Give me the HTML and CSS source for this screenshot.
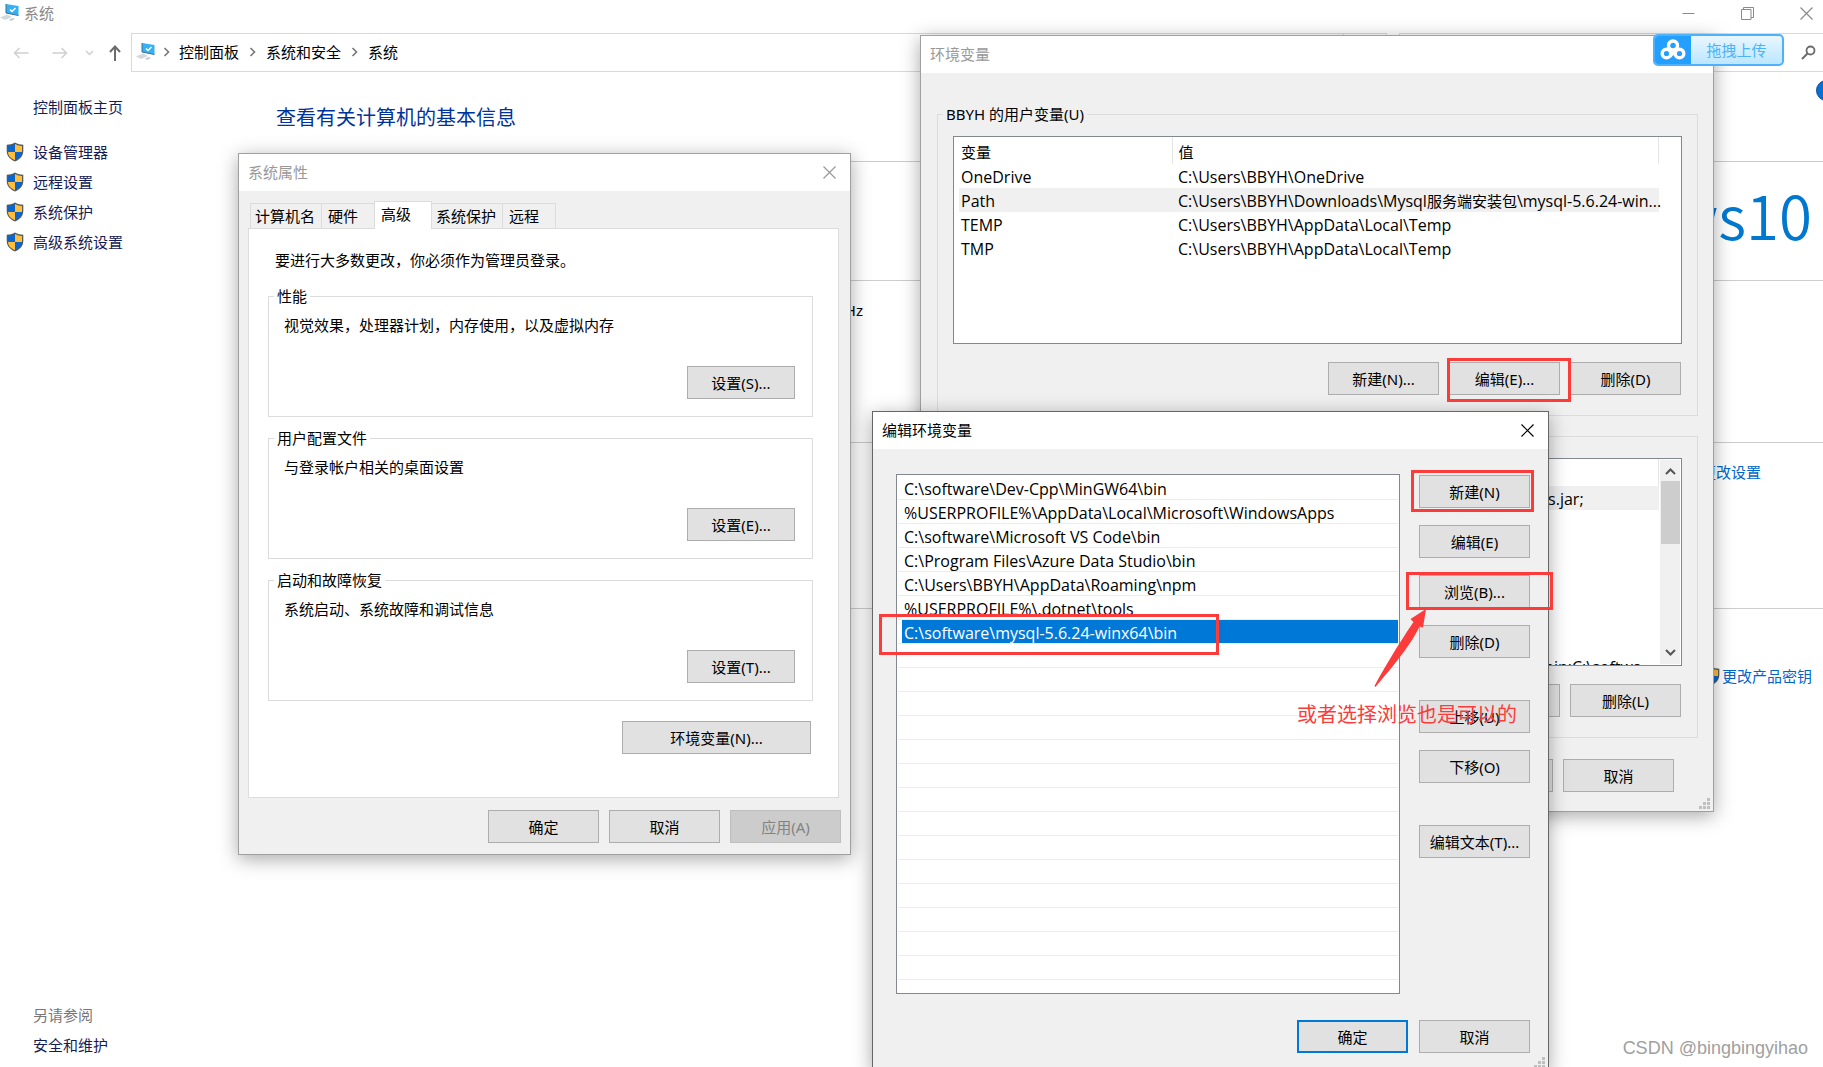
FILE: index.html
```html
<!DOCTYPE html>
<html lang="zh-CN">
<head>
<meta charset="utf-8">
<title>系统</title>
<link rel="stylesheet" href="styles.css">
</head>
<body>
<svg class="defs" aria-hidden="true">
  <symbol id="shield" viewBox="0 0 18 20">
    <path d="M9 0.5C6.500 2 3.500 2.700 0.700 2.700V9c0 5 3.500 8.500 8.300 10.500C13.800 17.500 17.300 14 17.300 9V2.700C14.500 2.700 11.500 2 9 .5z" fill="#555a5e"/>
    <path d="M9 2C7 3.200 4.500 3.900 2 4v6h7z" fill="#0a66cc"/>
    <path d="M9 2c2 1.200 4.500 1.900 7 2v6H9z" fill="#ffbf3c"/>
    <path d="M2 10h7v8.200C5 16.500 2.200 14 2 10z" fill="#ffbf3c"/>
    <path d="M16 10H9v8.200c4-1.700 6.800-4.200 7-8.200z" fill="#0a66cc"/>
  </symbol>
  <symbol id="computer" viewBox="0 0 20 18">
    <path d="M0 13.500l7-3 5 2.500-7 3z" fill="#d3d8dc"/>
    <path d="M9 15.500l4-1.500 2 1-4 2z" fill="#c3c9ce"/>
    <path d="M6 0l12.500 2v9.500L6 9z" fill="#35b0f5"/>
    <path d="M6 0v9l12.500 2.500" fill="none" stroke="#3c6e92"/>
    <path d="M10 5.500l2 2 3.500-3.500" fill="none" stroke="#fff" stroke-width="1.500"/>
  </symbol>
  <symbol id="cross" viewBox="0 0 13 13">
    <path d="M.5.5l12 12M12.500.5l-12 12" fill="none" stroke="currentColor" stroke-width="1.200"/>
  </symbol>
  <symbol id="chevron" viewBox="0 0 7 10">
    <path d="M1.500 1l4 4-4 4" fill="none" stroke="currentColor" stroke-width="1.600"/>
  </symbol>
  <symbol id="grip" viewBox="0 0 11 11">
    <path d="M8 0h3v3H8zM4 4h3v3H4zM8 4h3v3H8zM0 8h3v3H0zM4 8h3v3H4zM8 8h3v3H8z" fill="#bfbfbf"/>
  </symbol>
</svg>

<div class="desktop">
  <div class="explorer">
    <header class="titlebar">
      <svg class="ico-computer"><use href="#computer"/></svg>
      <span class="titlebar-text">系统</span>
      <div class="caption">
        <button class="caption-btn" aria-label="最小化"><svg width="13" height="13" viewBox="0 0 13 13"><path d="M.5 6.500h12" stroke="currentColor"/></svg></button>
        <button class="caption-btn" aria-label="还原"><svg width="13" height="13" viewBox="0 0 13 13"><path d="M.5 2.500h9.500v10H.5zM2.500 2.500v-2h10v10H10" fill="none" stroke="currentColor"/></svg></button>
        <button class="caption-btn" aria-label="关闭"><svg width="13" height="13"><use href="#cross"/></svg></button>
      </div>
    </header>

    <nav class="navbar">
      <div class="nav-buttons">
        <svg class="nav-off" width="16" height="12" viewBox="0 0 16 12"><path d="M15.500 6H1.500M6.500 1l-5 5 5 5" fill="none" stroke="currentColor" stroke-width="1.500"/></svg>
        <svg class="nav-off nav-forward" width="16" height="12" viewBox="0 0 16 12"><path d="M.5 6h14M9.500 1l5 5-5 5" fill="none" stroke="currentColor" stroke-width="1.500"/></svg>
        <svg class="nav-off nav-recent" width="9" height="6" viewBox="0 0 9 6"><path d="M1 1l3.500 3.500L8 1" fill="none" stroke="currentColor" stroke-width="1.500"/></svg>
        <svg class="nav-up" width="12" height="16" viewBox="0 0 12 16"><path d="M6 16V2M1 7l5-5.500L11 7" fill="none" stroke="currentColor" stroke-width="2"/></svg>
      </div>
      <div class="address">
        <svg class="ico-computer"><use href="#computer"/></svg>
        <svg class="crumb-sep"><use href="#chevron"/></svg>
        <a href="#panel">控制面板</a>
        <svg class="crumb-sep"><use href="#chevron"/></svg>
        <a href="#security">系统和安全</a>
        <svg class="crumb-sep"><use href="#chevron"/></svg>
        <a href="#system">系统</a>
        <span class="address-refresh"></span>
      </div>
      <div class="search">
        <svg width="15" height="15" viewBox="0 0 15 15"><circle cx="9.500" cy="5.500" r="4" fill="none" stroke="#6b6b6b" stroke-width="1.800"/><path d="M6.500 8.500L1 14" stroke="#6b6b6b" stroke-width="2"/></svg>
      </div>
    </nav>

    <div class="content">
      <aside class="sidebar">
        <a class="side-home" href="#home">控制面板主页</a>
        <ul class="side-list">
          <li><svg class="ico-shield"><use href="#shield"/></svg><a href="#devices">设备管理器</a></li>
          <li><svg class="ico-shield"><use href="#shield"/></svg><a href="#remote">远程设置</a></li>
          <li><svg class="ico-shield"><use href="#shield"/></svg><a href="#protect">系统保护</a></li>
          <li><svg class="ico-shield"><use href="#shield"/></svg><a href="#advanced">高级系统设置</a></li>
        </ul>
        <div class="see-also">
          <span>另请参阅</span>
          <a href="#maintenance">安全和维护</a>
        </div>
      </aside>
      <main class="main">
        <span class="help"></span>
        <h1>查看有关计算机的基本信息</h1>
        <section class="sec-edition">
          <h2>Windows 版本</h2>
          <div class="win10"><span>Windows</span><span>10</span></div>
        </section>
        <section class="sec-system">
          <h2>系统</h2>
          <div class="cpu">2.40GHz 2.42 GHz</div>
        </section>
        <section class="sec-name">
          <h2>计算机名</h2>
          <a class="link-change" href="#change">更改设置</a>
        </section>
        <section class="sec-activate">
          <h2>激活</h2>
          <div class="key"><svg class="ico-shield"><use href="#shield"/></svg><a href="#key">更改产品密钥</a></div>
        </section>
      </main>
    </div>
  </div>

  <div class="dialog dialog-props" role="dialog" aria-label="系统属性">
    <header class="dialog-title">
      <span>系统属性</span>
      <button class="close" aria-label="关闭"><svg width="13" height="13"><use href="#cross"/></svg></button>
    </header>
    <div class="props-body">
      <div class="tabs" role="tablist">
        <button class="tab tab-long" role="tab">计算机名</button>
        <button class="tab" role="tab">硬件</button>
        <button class="tab tab-active" role="tab" aria-selected="true">高级</button>
        <button class="tab tab-long" role="tab">系统保护</button>
        <button class="tab" role="tab">远程</button>
      </div>
      <div class="pane">
        <p class="pane-note">要进行大多数更改，你必须作为管理员登录。</p>
        <fieldset class="props-group">
          <legend>性能</legend>
          <p>视觉效果，处理器计划，内存使用，以及虚拟内存</p>
          <button class="btn">设置(S)...</button>
        </fieldset>
        <fieldset class="props-group">
          <legend>用户配置文件</legend>
          <p>与登录帐户相关的桌面设置</p>
          <button class="btn">设置(E)...</button>
        </fieldset>
        <fieldset class="props-group">
          <legend>启动和故障恢复</legend>
          <p>系统启动、系统故障和调试信息</p>
          <button class="btn">设置(T)...</button>
        </fieldset>
        <button class="btn btn-env">环境变量(N)...</button>
      </div>
      <div class="row-end props-actions">
        <button class="btn">确定</button>
        <button class="btn">取消</button>
        <button class="btn" disabled>应用(A)</button>
      </div>
    </div>
  </div>

  <div class="dialog dialog-env" role="dialog" aria-label="环境变量">
    <header class="dialog-title"><span>环境变量</span></header>
    <div class="env-body">
      <fieldset class="env-group">
        <legend>BBYH 的用户变量(U)</legend>
        <div class="grid-box">
          <table>
            <thead><tr><th class="col-name">变量</th><th>值</th></tr></thead>
            <tbody>
              <tr><td>OneDrive</td><td>C:\Users\BBYH\OneDrive</td></tr>
              <tr class="picked"><td>Path</td><td class="spill">C:\Users\BBYH\Downloads\Mysql<span class="hanzi">服务端安装包</span>\mysql-5.6.24-win...</td></tr>
              <tr><td>TEMP</td><td>C:\Users\BBYH\AppData\Local\Temp</td></tr>
              <tr><td>TMP</td><td>C:\Users\BBYH\AppData\Local\Temp</td></tr>
            </tbody>
          </table>
        </div>
        <div class="row-end env-actions">
          <button class="btn">新建(N)...</button>
          <button class="btn">编辑(E)...</button>
          <button class="btn">删除(D)</button>
        </div>
      </fieldset>
      <fieldset class="env-group">
        <legend>系统变量(S)</legend>
        <div class="grid-box">
          <table>
            <thead><tr><th class="col-name">变量</th><th>值</th></tr></thead>
            <tbody>
              <tr class="picked"><td>CLASSPATH</td><td>.;%JAVA_HOME%\lib\dt.jar;%JAVA_HOME%\lib\tools.jar;</td></tr>
              <tr><td>ComSpec</td><td>C:\Windows\system32\cmd.exe</td></tr>
              <tr><td>DriverData</td><td>C:\Windows\System32\Drivers</td></tr>
              <tr><td>JAVA_HOME</td><td>C:\software\jdk</td></tr>
              <tr><td>NUMBER</td><td>8</td></tr>
              <tr><td>OS</td><td>Windows_NT</td></tr>
              <tr><td>PATHEXT</td><td>.COM;.EXE;.BAT;.CMD</td></tr>
              <tr><td>Path</td><td>%JAVA_HOME%\bin;%JAVA_HOME%\software\jre\bin;C:\software\bin;C:\Windows</td></tr>
            </tbody>
          </table>
          <div class="scrollbar">
            <svg width="15" height="9" viewBox="0 0 15 9"><path d="M3 7l4.500-4.500L12 7" fill="none" stroke="#555" stroke-width="2"/></svg>
            <span class="thumb"></span>
            <svg width="15" height="9" viewBox="0 0 15 9"><path d="M3 2l4.500 4.500L12 2" fill="none" stroke="#555" stroke-width="2"/></svg>
          </div>
        </div>
        <div class="row-end env-actions">
          <button class="btn">新建(W)...</button>
          <button class="btn">编辑(I)...</button>
          <button class="btn">删除(L)</button>
        </div>
      </fieldset>
      <div class="row-end env-confirm">
        <button class="btn">确定</button>
        <button class="btn">取消</button>
      </div>
    </div>
    <svg class="grip"><use href="#grip"/></svg>
  </div>

  <div class="dialog dialog-edit" role="dialog" aria-label="编辑环境变量">
    <header class="dialog-title">
      <span>编辑环境变量</span>
      <button class="close" aria-label="关闭"><svg width="13" height="13"><use href="#cross"/></svg></button>
    </header>
    <div class="edit-body">
      <div class="edit-columns">
        <div class="paths-box">
          <ul class="paths">
            <li><span>C:\software\Dev-Cpp\MinGW64\bin</span></li>
            <li><span>%USERPROFILE%\AppData\Local\Microsoft\WindowsApps</span></li>
            <li><span>C:\software\Microsoft VS Code\bin</span></li>
            <li><span>C:\Program Files\Azure Data Studio\bin</span></li>
            <li><span>C:\Users\BBYH\AppData\Roaming\npm</span></li>
            <li><span>%USERPROFILE%\.dotnet\tools</span></li>
            <li class="current"><span>C:\software\mysql-5.6.24-winx64\bin</span></li>
          </ul>
        </div>
        <div class="edit-side">
          <button class="btn">新建(N)</button>
          <button class="btn">编辑(E)</button>
          <button class="btn">浏览(B)...</button>
          <button class="btn">删除(D)</button>
          <button class="btn btn-apart">上移(U)</button>
          <button class="btn">下移(O)</button>
          <button class="btn btn-apart">编辑文本(T)...</button>
        </div>
      </div>
      <div class="row-end edit-confirm">
        <button class="btn btn-default">确定</button>
        <button class="btn">取消</button>
      </div>
    </div>
    <svg class="grip"><use href="#grip"/></svg>
  </div>

  <button class="upload">
    <span class="upload-icon"><svg width="26" height="22" viewBox="0 0 26 22"><g fill="none" stroke="#fff" stroke-width="3.400"><circle cx="13" cy="6.500" r="4.500"/><circle cx="6.500" cy="14.500" r="4.300"/><circle cx="19.500" cy="14.500" r="4.300"/><path d="M10 17l6-5.500"/></g></svg></span>
    <span class="upload-text">拖拽上传</span>
  </button>

  <div class="mark mark-edit"></div>
  <div class="mark mark-new"></div>
  <div class="mark mark-browse"></div>
  <div class="mark mark-path"></div>
  <svg class="arrow" viewBox="0 0 54 80"><path d="M52 0L49 18.500 45.500 17.500C36 38 14 63 1.500 78L.5 77C10 59 24 36 39.500 13L36.500 10z" fill="#fc3b3b"/></svg>
  <p class="note">或者选择浏览也是可以的</p>
  <span class="watermark">CSDN @bingbingyihao</span>
</div>
</body>
</html>
```

FILE: styles.css
```css
* { box-sizing: border-box; }

body {
  margin: 0;
  background: #fff;
  color: #000;
  font: 15px/20px "Noto Sans", "Noto Sans CJK SC", sans-serif;
}

h1, h2, p, ul { margin: 0; padding: 0; font-weight: 400; }
ul { list-style: none; }
a { color: inherit; text-decoration: none; }
button { font: inherit; color: inherit; padding: 0; }
fieldset { margin: 0; min-width: 0; border: 1px solid #dcdcdc; }
legend { padding: 0 3px; }

.defs { position: absolute; width: 0; height: 0; }
.desktop { position: relative; height: 100vh; overflow: hidden; }

/* Explorer window */
.explorer { height: 100%; display: flex; flex-direction: column; }
.titlebar { display: flex; align-items: center; height: 26px; color: #888; }
.titlebar-text { margin-left: 4px; }
.ico-computer { width: 20px; height: 18px; }
.ico-shield { width: 18px; height: 20px; flex: none; }
.caption { display: flex; margin: 0 -13px 0 auto; color: #8a8a8a; }
.caption-btn {
  width: 59px; height: 26px; border: 0; background: none;
  display: flex; align-items: center; justify-content: center;
}

.navbar { display: flex; height: 39px; margin-top: 7px; }
.nav-buttons { width: 131px; padding-left: 13px; display: flex; align-items: center; color: #6b6b6b; }
.nav-off { color: #d0d0d0; }
.nav-forward { margin-left: 23px; }
.nav-recent { margin-left: 17px; }
.nav-up { margin-left: 15px; }
.address { flex: 1; display: flex; align-items: center; padding: 0 0 1px 4px; border: 1px solid #d9d9d9; }
.crumb-sep { width: 7px; height: 10px; margin: 0 9px 0 7px; color: #777; }
.address a + .crumb-sep { margin: 0 10px; }
.address-refresh { align-self: stretch; width: 43px; margin-left: auto; border-left: 1px solid #d9d9d9; }
.search {
  width: 424px; margin-left: 12px; padding-right: 7px;
  display: flex; align-items: center; justify-content: flex-end;
  border: 1px solid #d9d9d9; border-right: 0;
}

.content { flex: 1; display: flex; min-height: 0; }
.sidebar { width: 276px; display: flex; flex-direction: column; padding: 25px 0 12px 6px; color: #151c55; }
.side-home { margin-left: 27px; }
.side-list { margin-top: 20px; }
.side-list li { display: flex; gap: 9px; height: 30px; align-items: center; }
.see-also { margin: auto 0 0 27px; display: flex; flex-direction: column; gap: 10px; }
.see-also span { color: #777; }

.main { position: relative; flex: 1; overflow: hidden; padding-top: 32px; }
.main h1 { color: #003399; font-size: 20px; line-height: 28px; }
.main h2 { display: flex; align-items: center; gap: 8px; font-size: 15px; }
.main h2::after { content: ""; flex: 1; height: 1px; background: #ccc; }
.help {
  position: absolute; top: 8px; right: -14px; width: 21px; height: 21px;
  border: 1px solid #0a4f94; border-radius: 50%; background: #0a6fd0;
}
.sec-edition { height: 119px; margin-top: 19px; }
.sec-system { height: 162px; }
.sec-name { height: 166px; }
.win10 {
  display: flex; justify-content: flex-end; padding: 12px 11px 0 0;
  color: #0078d0; font: 350 60px/62px "Noto Sans CJK SC", sans-serif;
}
.cpu { width: 587px; padding-top: 10px; text-align: right; }
.link-change { display: block; padding: 10px 62px 0 0; text-align: right; color: #0066cc; }
.key { display: flex; gap: 2px; justify-content: flex-end; padding: 48px 11px 0 0; color: #0066cc; }

/* Dialog shell */
.dialog {
  position: absolute; display: flex; flex-direction: column;
  border: 1px solid #a0a0a0; background: #f0f0f0;
  box-shadow: 0 4px 18px rgba(0, 0, 0, .34);
}
.dialog-title {
  display: flex; align-items: center; justify-content: space-between;
  height: 37px; padding: 0 14px 1px 9px; background: #fff; color: #999;
}
.close { display: flex; border: 0; background: none; }
.grip { position: absolute; right: 3px; bottom: 2px; width: 11px; height: 11px; }

.btn { width: 111px; height: 33px; border: 1px solid #adadad; background: #e1e1e1; }
.btn:disabled { border-color: #bfbfbf; background: #ccc; color: #838383; }
.btn-default { border: 2px solid #0078d7; }
.row-end { display: flex; justify-content: flex-end; gap: 10px; }

/* System properties */
.dialog-props { left: 238px; top: 153px; width: 613px; }
.props-body { padding: 10px 9px 11px; }
.tabs { display: flex; align-items: flex-end; padding-left: 2px; }
.tab {
  width: 54px; height: 25px; margin-right: -1px; padding-left: 6px; text-align: left;
  border: 1px solid #dcdcdc; border-bottom: 0; background: #f0f0f0;
}
.tab-long { width: 72px; padding-left: 4px; }
.tab-active { z-index: 1; width: 58px; height: 28px; margin-bottom: -1px; padding-bottom: 3px; background: #fff; }
.pane {
  display: flex; flex-direction: column; margin-right: 2px; padding: 21px 25px 43px 19px;
  border: 1px solid #dcdcdc; background: #fff;
}
.pane-note { margin: 0 0 16px 7px; }
.props-group { height: 131px; margin-bottom: 11px; padding: 9px 17px 17px 15px; }
.props-group legend { margin-left: -10px; }
.props-group .btn { display: block; width: 108px; margin: 31px 0 0 auto; }
.btn-env { align-self: flex-end; width: 189px; margin: 9px 2px 0 0; }
.props-actions { margin-top: 12px; }

/* Environment variables */
.dialog-env { left: 920px; top: 35px; width: 794px; }
.env-body { padding: 31px 15px 19px 16px; }
.env-group { height: 312px; margin-bottom: 10px; padding: 12px 15px 0; }
.env-group legend { margin-left: -10px; }
.grid-box { display: flex; height: 208px; overflow: hidden; border: 1px solid #828790; background: #fff; }
.grid-box table { width: 700px; height: min-content; margin-left: 5px; table-layout: fixed; border-collapse: collapse; }
.grid-box th { height: 27px; padding: 2px 6px 0; border-right: 1px solid #e5e5e5; text-align: left; font-weight: 400; }
.grid-box .col-name { width: 213px; }
.grid-box td {
  height: 24px; padding: 2px 0 0 6px; overflow: hidden; white-space: nowrap; text-overflow: ellipsis;
  font-family: "Open Sans", "Noto Sans CJK SC", sans-serif; font-size: 16px;
}
.grid-box th:first-child, .grid-box td:first-child { padding-left: 2px; }
.grid-box .spill { overflow: visible; }
.hanzi { font-size: 15px; }
.picked { background: #f0f0f0; }
.scrollbar {
  width: 20px; margin: 1px; padding: 7px 0; background: #f0f0f0;
  display: flex; flex-direction: column; align-items: center;
}
.thumb { width: 19px; height: 63px; margin: 5px 0 auto; background: #cdcdcd; }
.env-actions { margin: 18px 1px 0 0; }
.env-confirm { margin: 21px 24px 0 0; }

/* Edit environment variable */
.dialog-edit { left: 872px; top: 411px; width: 677px; border-color: #666; }
.dialog-edit .dialog-title { color: #000; }
.edit-body { padding: 25px 18px 17px 23px; }
.edit-columns { display: flex; gap: 19px; }
.paths-box { flex: 1; height: 520px; padding: 1px 1px 0; border: 1px solid #828790; background: #fff; }
.paths {
  height: 100%; background: repeating-linear-gradient(#fff 0 23px, #ececec 23px 24px);
  font-family: "Open Sans", "Noto Sans CJK SC", sans-serif; font-size: 16px;
}
.paths li { display: flex; height: 24px; padding: 0 0 1px 4px; }
.paths span { flex: 1; padding: 3px 0 0 2px; }
.paths .current span { background: #0078d7; color: #fff; }
.edit-side { display: flex; flex-direction: column; gap: 17px; padding-top: 1px; }
.btn-apart { margin-top: 25px; }
.edit-confirm { gap: 11px; margin-top: 26px; }

/* Cloud drive drop target */
.upload {
  position: absolute; right: 39px; top: 34px; display: flex; width: 131px; height: 32px; overflow: hidden;
  border: 2px solid #4fb1fb; border-radius: 5px; background: linear-gradient(#e8f7ff, #bde6ff); color: #4cb3fb;
}
.upload-icon { display: flex; align-items: center; justify-content: center; width: 36px; height: 28px; background: #23a0ff; }
.upload-text { flex: 1; line-height: 28px; }

/* Annotations */
.mark { position: absolute; border: 3px solid #fc3b3b; }
.mark-edit { left: 1447px; top: 358px; width: 124px; height: 44px; }
.mark-new { left: 1411px; top: 470px; width: 123px; height: 42px; }
.mark-browse { left: 1406px; top: 572px; width: 147px; height: 38px; }
.mark-path { left: 879px; top: 614px; width: 340px; height: 41px; }
.arrow { position: absolute; left: 1374px; top: 609px; width: 54px; height: 80px; }
.note { position: absolute; left: 1297px; top: 701px; color: #fc3b3b; font-size: 20px; line-height: 28px; }
.watermark {
  position: absolute; right: 15px; bottom: 7px; color: #a0a0a0;
  font: 18px/24px "Liberation Sans", sans-serif;
}
```
